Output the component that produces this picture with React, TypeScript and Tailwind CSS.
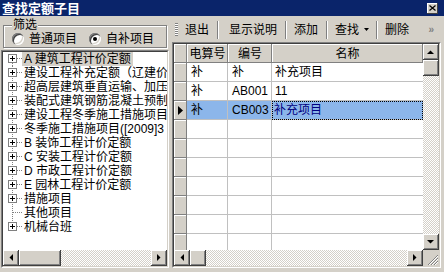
import React from "react";

type Dir = "up" | "down" | "left" | "right";

const treeItems = [
  { label: "A 建筑工程计价定额", plus: true, active: true },
  { label: "建设工程补充定额（辽建价发", plus: true },
  { label: "超高层建筑垂直运输、加压", plus: true },
  { label: "装配式建筑钢筋混凝土预制", plus: true },
  { label: "建设工程冬季施工措施项目", plus: true },
  { label: "冬季施工措施项目([2009]3", plus: true },
  { label: "B 装饰工程计价定额", plus: true },
  { label: "C 安装工程计价定额", plus: true },
  { label: "D 市政工程计价定额", plus: true },
  { label: "E 园林工程计价定额", plus: true },
  { label: "措施项目", plus: true },
  { label: "其他项目", plus: false },
  { label: "机械台班", plus: true, last: true },
];

const rows = [
  { a: "补", b: "补", c: "补充项目" },
  { a: "补", b: "AB001", c: "11" },
  { a: "补", b: "CB003", c: "补充项目", sel: true },
  { a: "", b: "", c: "" },
  { a: "", b: "", c: "" },
  { a: "", b: "", c: "" },
  { a: "", b: "", c: "" },
  { a: "", b: "", c: "" },
  { a: "", b: "", c: "" },
  { a: "", b: "", c: "" },
];

function Arrow({ dir }: { dir: Dir }) {
  const pts = {
    up: "0,4 7,4 3.5,0.5",
    down: "0,0 7,0 3.5,3.5",
    left: "4,0 4,7 0.5,3.5",
    right: "0,0 0,7 3.5,3.5",
  }[dir];
  const vertical = dir === "up" || dir === "down";
  return (
    <div className="w-4 h-4 shrink-0 flex items-center justify-center bg-[#d4d0c8] shadow-[inset_-1px_-1px_0_#404040,inset_1px_1px_0_#fff,inset_-2px_-2px_0_#808080]">
      <svg width={vertical ? 7 : 4} height={vertical ? 4 : 7} className="-mt-px -ml-px">
        <polygon points={pts} fill="#000" />
      </svg>
    </div>
  );
}

function PlusConnector({ plus, first, last }: { plus: boolean; first?: boolean; last?: boolean }) {
  return (
    <svg width="16" height="14" className="shrink-0">
      <line
        x1="4.5"
        x2="4.5"
        y1={first ? 7 : 0}
        y2={last ? 7 : 14}
        stroke="#808080"
        strokeDasharray="1 1"
      />
      <line x1="5" x2="15" y1="6.5" y2="6.5" stroke="#808080" strokeDasharray="1 1" />
      {plus && (
        <>
          <rect x="0.5" y="2.5" width="8" height="8" fill="#fff" stroke="#808080" />
          <line x1="2" x2="7" y1="6.5" y2="6.5" stroke="#000" />
          <line x1="4.5" x2="4.5" y1="4" y2="9" stroke="#000" />
        </>
      )}
    </svg>
  );
}

function Radio({ checked }: { checked?: boolean }) {
  return (
    <div className="w-3 h-3 rounded-full bg-white flex items-center justify-center shadow-[inset_1px_1px_0_#808080,inset_2px_2px_0_#404040,inset_-1px_-1px_0_#fff,inset_-2px_-2px_0_#d4d0c8]">
      {checked && <div className="w-1 h-1 rounded-full bg-black" />}
    </div>
  );
}

function Sep() {
  return <div className="w-[2px] h-[18px] border-l border-l-[#808080] border-r border-r-white" />;
}

export default function App() {
  return (
    <div className="w-[444px] h-[272px] bg-[#d4d0c8] flex flex-col overflow-hidden text-[12px] leading-[14px] text-black [font-family:'Liberation_Sans','Noto_Sans_CJK_SC',sans-serif]">
      {/* title bar */}
      <div className="h-4 shrink-0 bg-[#0a246a] flex items-center pl-[2px] pr-[6px]">
        <span className="block h-[15px] text-white font-bold text-[13px] leading-[15px]">查找定额子目</span>
        <div className="ml-auto w-[11px] h-[11px] bg-[#d4d0c8] flex items-center justify-center shadow-[inset_-1px_-1px_0_#404040,inset_1px_1px_0_#fff]">
          <svg width="7" height="6" className="-mt-px">
            <path d="M0.5 0.5 L6.5 5.5 M6.5 0.5 L0.5 5.5" stroke="#000" strokeWidth="1.2" />
          </svg>
        </div>
      </div>

      <div className="flex-1 flex pl-[1px] pr-[3px] pt-[1px] pb-[4px] min-h-0">
        {/* left panel */}
        <div className="w-[168px] flex flex-col">
          <fieldset className="mx-[2px] mt-[2px] h-[29px] px-[8px] border border-[#808080] shadow-[inset_1px_1px_0_#fff,1px_1px_0_#fff]">
            <legend className="px-[1px] h-3 text-[12px] leading-3 bg-[#d4d0c8]">筛选</legend>
            <div className="h-4 flex items-center">
              <Radio />
              <span className="ml-[5px]">普通项目</span>
              <div className="ml-[12px]">
                <Radio checked />
              </div>
              <span className="ml-[5px]">自补项目</span>
            </div>
          </fieldset>

          <div className="mt-[2px] flex-1 min-h-0 border border-t-[#808080] border-l-[#808080] border-r-white border-b-white">
            <div className="h-full border border-t-[#404040] border-l-[#404040] border-r-[#d4d0c8] border-b-[#d4d0c8] bg-white flex flex-col">
              <div className="flex-1 min-h-0 overflow-hidden pl-[5px]">
                {treeItems.map((t, i) => (
                  <div key={i} className="h-[14px] flex items-center whitespace-nowrap">
                    <PlusConnector plus={t.plus} first={i === 0} last={t.last} />
                    <span
                      className={
                        "inline-block h-[14px] leading-[14px] " +
                        (t.active ? "bg-[#d4d0c8] px-[2px] -ml-[2px]" : "")
                      }
                    >
                      {t.label}
                    </span>
                  </div>
                ))}
              </div>
              <div className="h-4 flex shrink-0">
                <Arrow dir="left" />
                <div className="w-[42px] h-4 bg-[#d4d0c8] shadow-[inset_-1px_-1px_0_#404040,inset_1px_1px_0_#fff,inset_-2px_-2px_0_#808080]" />
                <div className="flex-1 bg-[repeating-conic-gradient(#fff_0_25%,#d4d0c8_0_50%)] bg-[length:2px_2px]" />
                <Arrow dir="right" />
              </div>
            </div>
          </div>
        </div>

        {/* right panel */}
        <div className="flex-1 ml-[3px] flex flex-col min-w-0">
          <div className="h-[25px] shrink-0 flex items-center">
            <div className="ml-[3px] w-[3px] h-[13px] bg-[repeating-linear-gradient(to_bottom,#808080_0_1px,#fff_1px_2px)]" />
            <span className="ml-[7px]">退出</span>
            <div className="ml-[8px]"><Sep /></div>
            <span className="ml-[10px]">显示说明</span>
            <div className="ml-[8px]"><Sep /></div>
            <span className="ml-[7px]">添加</span>
            <div className="ml-[8px]"><Sep /></div>
            <span className="ml-[7px]">查找</span>
            <svg width="5" height="3" className="ml-[5px]">
              <polygon points="0,0 5,0 2.5,3" fill="#000" />
            </svg>
            <div className="ml-[7px]"><Sep /></div>
            <span className="ml-[7px]">删除</span>
            <span className="ml-auto mr-[7px] text-[10px] text-[#808080] font-bold">»</span>
          </div>

          <div className="flex-1 min-h-0 border border-t-[#808080] border-l-[#808080] border-r-white border-b-white">
            <div className="h-full border border-t-[#404040] border-l-[#404040] border-r-[#d4d0c8] border-b-[#d4d0c8] bg-white flex flex-col">
              <div className="flex-1 min-h-0 flex">
                <div className="flex-1 min-w-0 overflow-hidden">
                  <div className="h-[19px] flex">
                    <div className="w-[13px] bg-[#d4d0c8] shadow-[inset_-1px_-1px_0_#808080,inset_1px_1px_0_#fff]" />
                    <div className="w-[41px] bg-[#d4d0c8] flex items-center justify-center shadow-[inset_-1px_-1px_0_#808080,inset_1px_1px_0_#fff]">电算号</div>
                    <div className="w-[44px] bg-[#d4d0c8] flex items-center justify-center shadow-[inset_-1px_-1px_0_#808080,inset_1px_1px_0_#fff]">编号</div>
                    <div className="w-[151px] bg-[#d4d0c8] flex items-center justify-center shadow-[inset_-1px_-1px_0_#808080,inset_1px_1px_0_#fff]">名称</div>
                  </div>
                  {rows.map((r, i) => (
                    <div key={i} className="h-[19px] flex">
                      <div className="w-[13px] bg-[#d4d0c8] flex items-center justify-center shadow-[inset_-1px_-1px_0_#808080,inset_1px_1px_0_#fff]">
                        {r.sel && (
                          <svg width="5" height="9">
                            <polygon points="0,0 5,4.5 0,9" fill="#000" />
                          </svg>
                        )}
                      </div>
                      <div className={"w-[41px] pl-[4px] flex items-center border-r border-b border-[#c0c0c0] " + (r.sel ? "bg-[#8cb6ea]" : "")}>{r.a}</div>
                      <div className={"w-[44px] pl-[4px] flex items-center border-r border-b border-[#c0c0c0] " + (r.sel ? "bg-[#8cb6ea]" : "")}>{r.b}</div>
                      <div className={"w-[151px] flex items-center border-b border-[#c0c0c0] " + (r.sel ? "bg-[#8cb6ea] text-[#000080] pl-[2px] outline-1 outline-dotted outline-black -outline-offset-1" : "pl-[3px]")}>{r.c}</div>
                    </div>
                  ))}
                </div>
                <div className="w-4 flex flex-col shrink-0">
                  <Arrow dir="up" />
                  <div className="h-4 bg-[#d4d0c8] shadow-[inset_-1px_-1px_0_#404040,inset_1px_1px_0_#fff,inset_-2px_-2px_0_#808080]" />
                  <div className="flex-1 bg-[repeating-conic-gradient(#fff_0_25%,#d4d0c8_0_50%)] bg-[length:2px_2px]" />
                  <Arrow dir="down" />
                </div>
              </div>
              <div className="h-4 flex shrink-0">
                <Arrow dir="left" />
                <div className="w-4 h-4 bg-[#d4d0c8] shadow-[inset_-1px_-1px_0_#404040,inset_1px_1px_0_#fff,inset_-2px_-2px_0_#808080]" />
                <div className="flex-1 bg-[repeating-conic-gradient(#fff_0_25%,#d4d0c8_0_50%)] bg-[length:2px_2px]" />
                <Arrow dir="right" />
                <div className="w-4 h-4 bg-[#d4d0c8] flex items-end justify-end">
                  <svg width="12" height="12">
                    <path d="M11 1 L1 11 M11 4 L4 11 M11 7 L7 11" stroke="#808080" strokeWidth="1" />
                    <path d="M11 2 L2 11 M11 5 L5 11 M11 8 L8 11" stroke="#fff" strokeWidth="1" />
                  </svg>
                </div>
              </div>
            </div>
          </div>
        </div>
      </div>
    </div>
  );
}
